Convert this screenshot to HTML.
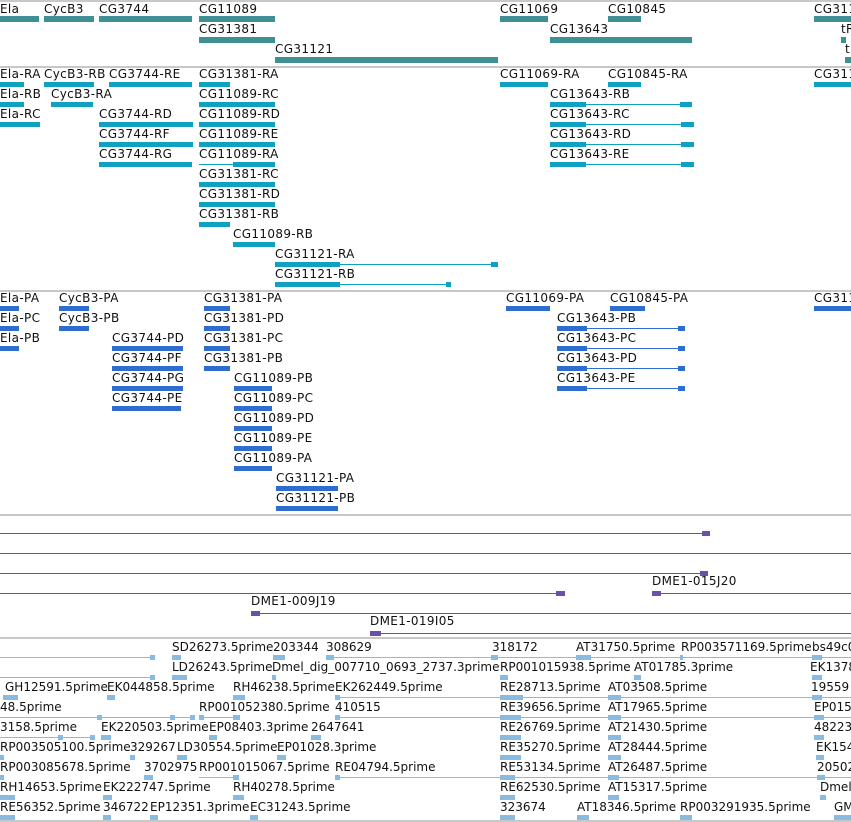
<!DOCTYPE html>
<html><head><meta charset="utf-8"><style>
body{margin:0;width:851px;height:822px;background:#fff;position:relative;overflow:hidden;font-family:"DejaVu Sans","Liberation Sans",sans-serif;}
div.s{position:absolute;left:0;width:851px;height:2px;background:#c8c8c8}
span{position:absolute;font-size:12px;line-height:13px;letter-spacing:0.35px;color:#111;white-space:nowrap}
i{position:absolute;height:5px;display:block}
i.a{background:#3f9094;height:6px}
i.b{background:#0fa0c2}
i.c{background:#2e6ccf}
i.d{background:#6a50a7}
i.e{background:#87bbe0}
i.n{height:1px}
.q span{letter-spacing:0px}
</style></head><body>
<div class="s" style="top:0"></div>
<!-- track1 -->
<span style="left:0;top:3px">Ela</span><i class="a" style="left:0;top:16px;width:39px"></i>
<span style="left:44px;top:3px">CycB3</span><i class="a" style="left:44px;top:16px;width:50px"></i>
<span style="left:99px;top:3px">CG3744</span><i class="a" style="left:99px;top:16px;width:93px"></i>
<span style="left:199px;top:3px">CG11089</span><i class="a" style="left:199px;top:16px;width:76px"></i>
<span style="left:500px;top:3px">CG11069</span><i class="a" style="left:500px;top:16px;width:48px"></i>
<span style="left:608px;top:3px">CG10845</span><i class="a" style="left:608px;top:16px;width:33px"></i>
<span style="left:814px;top:3px">CG311</span><i class="a" style="left:814px;top:16px;width:37px"></i>
<span style="left:199px;top:23px">CG31381</span><i class="a" style="left:199px;top:37px;width:76px"></i>
<span style="left:550px;top:23px">CG13643</span><i class="a" style="left:550px;top:37px;width:142px"></i>
<span style="left:841px;top:23px">tR</span><i class="a" style="left:841px;top:37px;width:5px"></i>
<span style="left:275px;top:43px">CG31121</span><i class="a" style="left:275px;top:57px;width:223px"></i>
<span style="left:845px;top:43px">tl</span><i class="a" style="left:845px;top:57px;width:6px"></i>
<div class="s" style="top:66px"></div>
<!-- track2 -->
<span style="left:0;top:68px">Ela-RA</span><i class="b" style="left:0;top:82px;width:24px"></i>
<span style="left:44px;top:68px">CycB3-RB</span><i class="b" style="left:44px;top:82px;width:50px"></i>
<span style="left:109px;top:68px">CG3744-RE</span><i class="b" style="left:109px;top:82px;width:83px"></i>
<span style="left:199px;top:68px">CG31381-RA</span><i class="b" style="left:199px;top:82px;width:31px"></i>
<span style="left:500px;top:68px">CG11069-RA</span><i class="b" style="left:500px;top:82px;width:48px"></i>
<span style="left:608px;top:68px">CG10845-RA</span><i class="b" style="left:608px;top:82px;width:33px"></i>
<span style="left:814px;top:68px">CG311</span><i class="b" style="left:814px;top:82px;width:37px"></i>
<span style="left:0;top:88px">Ela-RB</span><i class="b" style="left:0;top:102px;width:24px"></i>
<span style="left:51px;top:88px">CycB3-RA</span><i class="b" style="left:51px;top:102px;width:42px"></i>
<span style="left:199px;top:88px">CG11089-RC</span><i class="b" style="left:199px;top:102px;width:76px"></i>
<span style="left:550px;top:88px">CG13643-RB</span><i class="b" style="left:550px;top:102px;width:36px"></i><i class="b n" style="left:550px;top:104px;width:142px"></i><i class="b" style="left:680px;top:102px;width:12px"></i>
<span style="left:0;top:108px">Ela-RC</span><i class="b" style="left:0;top:122px;width:40px"></i>
<span style="left:99px;top:108px">CG3744-RD</span><i class="b" style="left:99px;top:122px;width:94px"></i>
<span style="left:199px;top:108px">CG11089-RD</span><i class="b" style="left:199px;top:122px;width:76px"></i>
<span style="left:550px;top:108px">CG13643-RC</span><i class="b" style="left:550px;top:122px;width:36px"></i><i class="b n" style="left:550px;top:124px;width:144px"></i><i class="b" style="left:681px;top:122px;width:13px"></i>
<span style="left:99px;top:128px">CG3744-RF</span><i class="b" style="left:99px;top:142px;width:94px"></i>
<span style="left:199px;top:128px">CG11089-RE</span><i class="b" style="left:199px;top:142px;width:76px"></i>
<span style="left:550px;top:128px">CG13643-RD</span><i class="b" style="left:550px;top:142px;width:36px"></i><i class="b n" style="left:550px;top:144px;width:144px"></i><i class="b" style="left:681px;top:142px;width:13px"></i>
<span style="left:99px;top:148px">CG3744-RG</span><i class="b" style="left:99px;top:162px;width:93px"></i>
<span style="left:199px;top:148px">CG11089-RA</span><i class="b n" style="left:199px;top:164px;width:76px"></i><i class="b" style="left:233px;top:162px;width:42px"></i>
<span style="left:550px;top:148px">CG13643-RE</span><i class="b" style="left:550px;top:162px;width:36px"></i><i class="b n" style="left:550px;top:164px;width:144px"></i><i class="b" style="left:681px;top:162px;width:13px"></i>
<span style="left:199px;top:168px">CG31381-RC</span><i class="b" style="left:199px;top:182px;width:76px"></i>
<span style="left:199px;top:188px">CG31381-RD</span><i class="b" style="left:199px;top:202px;width:76px"></i>
<span style="left:199px;top:208px">CG31381-RB</span><i class="b" style="left:199px;top:222px;width:31px"></i>
<span style="left:233px;top:228px">CG11089-RB</span><i class="b" style="left:233px;top:242px;width:42px"></i>
<span style="left:275px;top:248px">CG31121-RA</span><i class="b" style="left:275px;top:262px;width:65px"></i><i class="b n" style="left:275px;top:264px;width:223px"></i><i class="b" style="left:491px;top:262px;width:7px"></i>
<span style="left:275px;top:268px">CG31121-RB</span><i class="b" style="left:275px;top:282px;width:65px"></i><i class="b n" style="left:275px;top:284px;width:176px"></i><i class="b" style="left:446px;top:282px;width:5px"></i>
<div class="s" style="top:290px"></div>
<!-- track3 -->
<span style="left:0;top:292px">Ela-PA</span><i class="c" style="left:0;top:306px;width:19px"></i>
<span style="left:59px;top:292px">CycB3-PA</span><i class="c" style="left:59px;top:306px;width:30px"></i>
<span style="left:204px;top:292px">CG31381-PA</span><i class="c" style="left:204px;top:306px;width:26px"></i>
<span style="left:506px;top:292px">CG11069-PA</span><i class="c" style="left:506px;top:306px;width:44px"></i>
<span style="left:610px;top:292px">CG10845-PA</span><i class="c" style="left:610px;top:306px;width:35px"></i>
<span style="left:814px;top:292px">CG311</span><i class="c" style="left:814px;top:306px;width:37px"></i>
<span style="left:0;top:312px">Ela-PC</span><i class="c" style="left:0;top:326px;width:19px"></i>
<span style="left:59px;top:312px">CycB3-PB</span><i class="c" style="left:59px;top:326px;width:30px"></i>
<span style="left:204px;top:312px">CG31381-PD</span><i class="c" style="left:204px;top:326px;width:26px"></i>
<span style="left:557px;top:312px">CG13643-PB</span><i class="c" style="left:557px;top:326px;width:30px"></i><i class="c n" style="left:557px;top:328px;width:128px"></i><i class="c" style="left:678px;top:326px;width:7px"></i>
<span style="left:0;top:332px">Ela-PB</span><i class="c" style="left:0;top:346px;width:19px"></i>
<span style="left:112px;top:332px">CG3744-PD</span><i class="c" style="left:112px;top:346px;width:71px"></i>
<span style="left:204px;top:332px">CG31381-PC</span><i class="c" style="left:204px;top:346px;width:26px"></i>
<span style="left:557px;top:332px">CG13643-PC</span><i class="c" style="left:557px;top:346px;width:30px"></i><i class="c n" style="left:557px;top:348px;width:128px"></i><i class="c" style="left:678px;top:346px;width:7px"></i>
<span style="left:112px;top:352px">CG3744-PF</span><i class="c" style="left:112px;top:366px;width:71px"></i>
<span style="left:204px;top:352px">CG31381-PB</span><i class="c" style="left:204px;top:366px;width:26px"></i>
<span style="left:557px;top:352px">CG13643-PD</span><i class="c" style="left:557px;top:366px;width:30px"></i><i class="c n" style="left:557px;top:368px;width:128px"></i><i class="c" style="left:678px;top:366px;width:7px"></i>
<span style="left:112px;top:372px">CG3744-PG</span><i class="c" style="left:112px;top:386px;width:71px"></i>
<span style="left:234px;top:372px">CG11089-PB</span><i class="c" style="left:234px;top:386px;width:38px"></i>
<span style="left:557px;top:372px">CG13643-PE</span><i class="c" style="left:557px;top:386px;width:30px"></i><i class="c n" style="left:557px;top:388px;width:128px"></i><i class="c" style="left:678px;top:386px;width:7px"></i>
<span style="left:112px;top:392px">CG3744-PE</span><i class="c" style="left:112px;top:406px;width:69px"></i>
<span style="left:234px;top:392px">CG11089-PC</span><i class="c" style="left:234px;top:406px;width:38px"></i>
<span style="left:234px;top:412px">CG11089-PD</span><i class="c" style="left:234px;top:426px;width:38px"></i>
<span style="left:234px;top:432px">CG11089-PE</span><i class="c" style="left:234px;top:446px;width:38px"></i>
<span style="left:234px;top:452px">CG11089-PA</span><i class="c" style="left:234px;top:466px;width:38px"></i>
<span style="left:276px;top:472px">CG31121-PA</span><i class="c" style="left:276px;top:486px;width:62px"></i>
<span style="left:276px;top:492px">CG31121-PB</span><i class="c" style="left:276px;top:506px;width:62px"></i>
<div class="s" style="top:514px"></div>
<!-- track4 -->
<i class="d n" style="left:0;top:533px;width:710px"></i><i class="d" style="left:702px;top:531px;width:8px"></i>
<i class="d n" style="left:0;top:553px;width:851px"></i>
<i class="d n" style="left:0;top:573px;width:708px"></i><i class="d" style="left:700px;top:571px;width:8px"></i>
<i class="d n" style="left:0;top:593px;width:565px"></i><i class="d" style="left:556px;top:591px;width:9px"></i>
<span style="left:652px;top:575px">DME1-015J20</span><i class="d n" style="left:652px;top:593px;width:199px"></i><i class="d" style="left:652px;top:591px;width:9px"></i>
<span style="left:251px;top:595px">DME1-009J19</span><i class="d n" style="left:251px;top:613px;width:600px"></i><i class="d" style="left:251px;top:611px;width:9px"></i>
<span style="left:370px;top:615px">DME1-019I05</span><i class="d n" style="left:370px;top:633px;width:481px"></i><i class="d" style="left:370px;top:631px;width:11px"></i>
<div class="s" style="top:637px"></div>
<!-- track5 -->
<div class="q">
<i class="e n" style="left:0;top:657px;width:155px"></i><i class="e" style="left:150px;top:655px;width:5px"></i>
<span style="left:172px;top:641px">SD26273.5prime</span><i class="e" style="left:172px;top:655px;width:9px"></i>
<span style="left:273px;top:641px">203344</span><i class="e" style="left:273px;top:655px;width:12px"></i>
<span style="left:326px;top:641px">308629</span><i class="e n" style="left:326px;top:657px;width:525px"></i><i class="e" style="left:326px;top:655px;width:8px"></i>
<span style="left:492px;top:641px">318172</span><i class="e" style="left:491px;top:655px;width:7px"></i>
<span style="left:576px;top:641px">AT31750.5prime</span><i class="e" style="left:576px;top:655px;width:15px"></i>
<span style="left:681px;top:641px">RP003571169.5prime</span><i class="e" style="left:680px;top:655px;width:3px"></i>
<span style="left:812px;top:641px">bs49c0</span><i class="e" style="left:812px;top:655px;width:10px"></i>

<i class="e n" style="left:0;top:677px;width:155px"></i><i class="e" style="left:150px;top:675px;width:5px"></i>
<span style="left:172px;top:661px">LD26243.5prime</span><i class="e" style="left:172px;top:675px;width:15px"></i>
<span style="left:272px;top:661px">Dmel_dig_007710_0693_2737.3prime</span><i class="e" style="left:272px;top:675px;width:4px"></i>
<span style="left:500px;top:661px">RP001015938.5prime</span><i class="e" style="left:500px;top:675px;width:8px"></i>
<span style="left:634px;top:661px">AT01785.3prime</span><i class="e" style="left:634px;top:675px;width:7px"></i>
<span style="left:810px;top:661px">EK1378</span><i class="e" style="left:812px;top:675px;width:10px"></i>

<span style="left:5px;top:681px">GH12591.5prime</span><i class="e" style="left:3px;top:695px;width:15px"></i>
<span style="left:107px;top:681px">EK044858.5prime</span><i class="e" style="left:107px;top:695px;width:8px"></i>
<span style="left:233px;top:681px">RH46238.5prime</span><i class="e" style="left:233px;top:695px;width:12px"></i>
<span style="left:335px;top:681px">EK262449.5prime</span><i class="e n" style="left:335px;top:697px;width:516px"></i><i class="e" style="left:335px;top:695px;width:5px"></i>
<span style="left:500px;top:681px">RE28713.5prime</span><i class="e" style="left:500px;top:695px;width:23px"></i>
<span style="left:608px;top:681px">AT03508.5prime</span><i class="e" style="left:608px;top:695px;width:13px"></i>
<span style="left:811px;top:681px">19559</span><i class="e" style="left:812px;top:695px;width:10px"></i>

<span style="left:0;top:701px">48.5prime</span>
<i class="e n" style="left:0;top:717px;width:195px"></i><i class="e" style="left:97px;top:715px;width:5px"></i><i class="e" style="left:170px;top:715px;width:5px"></i><i class="e" style="left:190px;top:715px;width:5px"></i>
<i class="e n" style="left:199px;top:717px;width:40px"></i><i class="e" style="left:199px;top:715px;width:5px"></i><i class="e" style="left:233px;top:715px;width:7px"></i>
<i class="e n" style="left:335px;top:717px;width:516px"></i><i class="e" style="left:335px;top:715px;width:5px"></i>
<span style="left:199px;top:701px">RP001052380.5prime</span>
<span style="left:335px;top:701px">410515</span>
<span style="left:500px;top:701px">RE39656.5prime</span><i class="e" style="left:500px;top:715px;width:21px"></i>
<span style="left:608px;top:701px">AT17965.5prime</span><i class="e" style="left:608px;top:715px;width:13px"></i>
<span style="left:814px;top:701px">EP015</span><i class="e" style="left:814px;top:715px;width:10px"></i>

<span style="left:0;top:721px">3158.5prime</span>
<i class="e n" style="left:0;top:737px;width:95px"></i><i class="e" style="left:58px;top:735px;width:5px"></i><i class="e" style="left:90px;top:735px;width:5px"></i>
<i class="e" style="left:101px;top:735px;width:10px"></i><i class="e" style="left:209px;top:735px;width:8px"></i><i class="e" style="left:311px;top:735px;width:10px"></i>
<span style="left:101px;top:721px">EK220503.5prime</span>
<span style="left:209px;top:721px">EP08403.3prime</span>
<span style="left:311px;top:721px">2647641</span>
<span style="left:500px;top:721px">RE26769.5prime</span><i class="e" style="left:500px;top:735px;width:21px"></i>
<span style="left:608px;top:721px">AT21430.5prime</span><i class="e" style="left:608px;top:735px;width:13px"></i>
<span style="left:814px;top:721px">48223</span><i class="e" style="left:814px;top:735px;width:10px"></i>

<span style="left:0;top:741px">RP003505100.5prime</span>
<i class="e" style="left:0;top:755px;width:4px"></i><i class="e" style="left:130px;top:755px;width:5px"></i><i class="e" style="left:177px;top:755px;width:10px"></i><i class="e" style="left:277px;top:755px;width:9px"></i>
<span style="left:130px;top:741px">329267</span>
<span style="left:177px;top:741px">LD30554.5prime</span>
<span style="left:277px;top:741px">EP01028.3prime</span>
<span style="left:500px;top:741px">RE35270.5prime</span><i class="e" style="left:500px;top:755px;width:21px"></i>
<span style="left:608px;top:741px">AT28444.5prime</span><i class="e" style="left:608px;top:755px;width:13px"></i>
<span style="left:816px;top:741px">EK154</span><i class="e" style="left:816px;top:755px;width:8px"></i>

<i class="e" style="left:0;top:775px;width:4px"></i><i class="e" style="left:144px;top:775px;width:9px"></i><i class="e n" style="left:199px;top:777px;width:40px"></i><i class="e" style="left:233px;top:775px;width:6px"></i><i class="e n" style="left:335px;top:777px;width:516px"></i><i class="e" style="left:335px;top:775px;width:5px"></i>
<span style="left:0;top:761px">RP003085678.5prime</span>
<span style="left:144px;top:761px">3702975</span>
<span style="left:199px;top:761px">RP001015067.5prime</span>
<span style="left:335px;top:761px">RE04794.5prime</span>
<span style="left:500px;top:761px">RE53134.5prime</span><i class="e" style="left:500px;top:775px;width:15px"></i>
<span style="left:608px;top:761px">AT26487.5prime</span><i class="e" style="left:608px;top:775px;width:11px"></i>
<span style="left:817px;top:761px">20502</span><i class="e" style="left:817px;top:775px;width:8px"></i>

<i class="e" style="left:0;top:795px;width:15px"></i><i class="e" style="left:103px;top:795px;width:9px"></i><i class="e" style="left:233px;top:795px;width:11px"></i>
<span style="left:0;top:781px">RH14653.5prime</span>
<span style="left:103px;top:781px">EK222747.5prime</span>
<span style="left:233px;top:781px">RH40278.5prime</span>
<span style="left:500px;top:781px">RE62530.5prime</span><i class="e" style="left:500px;top:795px;width:15px"></i>
<span style="left:608px;top:781px">AT15317.5prime</span><i class="e" style="left:608px;top:795px;width:11px"></i>
<span style="left:820px;top:781px">Dmel</span><i class="e" style="left:820px;top:795px;width:6px"></i>

<i class="e" style="left:0;top:815px;width:15px"></i><i class="e" style="left:103px;top:815px;width:8px"></i><i class="e" style="left:150px;top:815px;width:8px"></i><i class="e" style="left:250px;top:815px;width:8px"></i><i class="e" style="left:500px;top:815px;width:15px"></i><i class="e" style="left:577px;top:815px;width:12px"></i><i class="e" style="left:680px;top:815px;width:12px"></i><i class="e" style="left:834px;top:815px;width:17px"></i>
<span style="left:0;top:801px">RE56352.5prime</span>
<span style="left:103px;top:801px">346722</span>
<span style="left:150px;top:801px">EP12351.3prime</span>
<span style="left:250px;top:801px">EC31243.5prime</span>
<span style="left:500px;top:801px">323674</span>
<span style="left:577px;top:801px">AT18346.5prime</span>
<span style="left:680px;top:801px">RP003291935.5prime</span>
<span style="left:834px;top:801px">GM</span>
</div>
<div class="s" style="top:820px"></div>
</body></html>
